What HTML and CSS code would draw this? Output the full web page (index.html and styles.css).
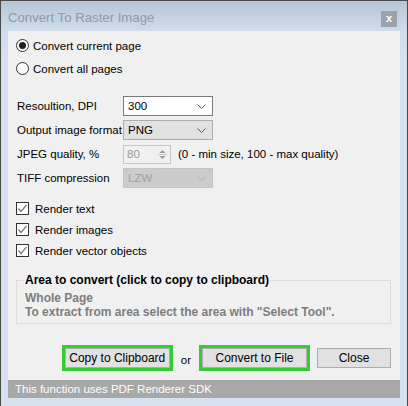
FILE: index.html
```html
<!DOCTYPE html>
<html lang="en">
<head>
  <meta charset="UTF-8" />
  <title>Convert To Raster Image</title>
  <link rel="stylesheet" href="styles.css">
</head>
<body>

<div class="window">
  <!-- title bar -->
  <div class="titlebar">
    <span class="title">Convert To Raster Image</span>
    <span class="close">x</span>
  </div>

  <div class="panel">
    <div class="radios">
      <label class="radio-row"><span class="radio checked"></span>Convert current page</label>
      <label class="radio-row"><span class="radio"></span>Convert all pages</label>
    </div>

    <div class="form">
      <div class="form-row">
        <span class="label">Resoultion, DPI</span>
        <div class="select active">
          <span>300</span>
          <svg class="chev" width="9" height="5" viewBox="0 0 9 5"><polyline points="0.5,0.5 4.5,4.5 8.5,0.5" fill="none" stroke="#555" stroke-width="1"/></svg>
        </div>
      </div>
      <div class="form-row">
        <span class="label">Output image format</span>
        <div class="select">
          <span>PNG</span>
          <svg class="chev" width="9" height="5" viewBox="0 0 9 5"><polyline points="0.5,0.5 4.5,4.5 8.5,0.5" fill="none" stroke="#555" stroke-width="1"/></svg>
        </div>
      </div>
      <div class="form-row">
        <span class="label">JPEG quality, %</span>
        <div class="spin">
          <span>80</span>
          <span class="spin-btns">
            <svg width="11" height="15" viewBox="0 0 11 15">
              <polygon points="5.5,3 8.5,6 2.5,6" fill="#9a9a9a"/>
              <line x1="1" y1="7.5" x2="10" y2="7.5" stroke="#c8c8c8"/>
              <polygon points="2.5,9 8.5,9 5.5,12" fill="#9a9a9a"/>
            </svg>
          </span>
        </div>
        <span class="note">(0 - min size, 100 - max quality)</span>
      </div>
      <div class="form-row">
        <span class="label">TIFF compression</span>
        <div class="select disabled">
          <span>LZW</span>
          <svg class="chev" width="9" height="5" viewBox="0 0 9 5"><polyline points="0.5,0.5 4.5,4.5 8.5,0.5" fill="none" stroke="#b0b0b0" stroke-width="1"/></svg>
        </div>
      </div>
    </div>

    <div class="checks">
      <label class="check-row"><span class="check"><svg width="11" height="11" viewBox="0 0 11 11"><polyline points="1.5,5.5 4,8.5 9.5,2" fill="none" stroke="#777" stroke-width="1.2"/></svg></span>Render text</label>
      <label class="check-row"><span class="check"><svg width="11" height="11" viewBox="0 0 11 11"><polyline points="1.5,5.5 4,8.5 9.5,2" fill="none" stroke="#777" stroke-width="1.2"/></svg></span>Render images</label>
      <label class="check-row"><span class="check"><svg width="11" height="11" viewBox="0 0 11 11"><polyline points="1.5,5.5 4,8.5 9.5,2" fill="none" stroke="#777" stroke-width="1.2"/></svg></span>Render vector objects</label>
    </div>

    <fieldset class="area">
      <legend>Area to convert (click to copy to clipboard)</legend>
      <div class="area-text">Whole Page</div>
      <div class="area-text">To extract from area select the area with "Select Tool".</div>
    </fieldset>

    <div class="buttons">
      <span class="highlight"><button>Copy to Clipboard</button></span>
      <span class="or">or</span>
      <span class="highlight"><button>Convert to File</button></span>
      <button class="close-btn">Close</button>
    </div>
  </div>

  <div class="footer">This function uses PDF Renderer SDK</div>
</div>

</body>
</html>
```

FILE: styles.css
```css
body {
  margin: 0;
  font-family: "Liberation Sans", Arial, sans-serif;
  font-size: 11.5px;
  color: #000;
}

.window {
  width: 408px;
  height: 406px;
  box-sizing: border-box;
  border: 1px solid #4a4a4a;
  border-bottom: none;
  padding: 0 7px 8px 7px;
  background: linear-gradient(#b6c6d6 0px, #cfdcea 30px, #d6e2ef 60px);
}

/* title bar */
.titlebar {
  height: 30px;
  display: flex;
  align-items: center;
  justify-content: space-between;
}

.title {
  font-size: 13.2px;
  color: #8d9aa7;
  padding-top: 2px;
}

.close {
  width: 16px;
  height: 16px;
  margin-right: 3px;
  margin-top: 6px;
  background: #9aa3ab;
  color: #fff;
  font-weight: bold;
  font-size: 11px;
  line-height: 14px;
  text-align: center;
}

.panel {
  height: 349px;
  box-sizing: border-box;
  background: #f0f0f0;
  padding: 3px 9px 0 8px;
  display: flex;
  flex-direction: column;
}

/* radios */
.radio-row {
  height: 23px;
  display: flex;
  align-items: center;
}

.radio {
  width: 11px;
  height: 11px;
  border: 1px solid #333;
  border-radius: 50%;
  background: #fff;
  margin-right: 4px;
  position: relative;
}

.radio.checked::after {
  content: "";
  position: absolute;
  left: 2px;
  top: 2px;
  width: 7px;
  height: 7px;
  border-radius: 50%;
  background: #222;
}

/* form rows */
.form {
  margin-top: 16px;
  display: flex;
  flex-direction: column;
  gap: 4px;
}

.form-row {
  height: 20px;
  display: flex;
  align-items: center;
}

.label {
  width: 106px;
  padding-left: 1px;
  white-space: nowrap;
}

.select {
  width: 90px;
  height: 20px;
  box-sizing: border-box;
  border: 1px solid #adadad;
  background: #e1e1e1;
  display: flex;
  align-items: center;
  justify-content: space-between;
  padding: 0 6px 0 4px;
}

.select.active {
  background: #fff;
  border-color: #7a7a7a;
}

.select.disabled {
  background: #cccccc;
  border-color: #c4c4c4;
  color: #a0a0a0;
}

.spin {
  width: 48px;
  height: 19px;
  box-sizing: border-box;
  border: 1px solid #c6c6c6;
  background: #f0f0f0;
  color: #9a9a9a;
  display: flex;
  align-items: center;
  justify-content: space-between;
  padding: 0 2px 0 3px;
}

.spin-btns {
  display: flex;
}

.note {
  margin-left: 7px;
}

/* checkboxes */
.checks {
  margin-top: 10px;
}

.check-row {
  height: 21px;
  display: flex;
  align-items: center;
}

.check {
  width: 11px;
  height: 11px;
  border: 1px solid #333;
  background: #fff;
  margin-right: 6px;
  display: flex;
}

/* area group */
.area {
  margin: 12px 0 0 0;
  padding: 4px 8px 4px 8px;
  border: 1px solid #dcdcdc;
}

.area legend {
  font-weight: bold;
  font-size: 12px;
  padding: 0 1px;
  margin-left: -1px;
}

.area-text {
  font-weight: bold;
  font-size: 12px;
  color: #7d7d7d;
  line-height: 14px;
}

/* buttons */
.buttons {
  margin-top: auto;
  margin-bottom: 9px;
  display: flex;
  align-items: center;
  justify-content: flex-end;
}

.highlight {
  border: 3px solid #33cc33;
  display: flex;
}

button {
  font-family: "Liberation Sans", Arial, sans-serif;
  font-size: 12px;
  height: 20px;
  border: 1px solid #adadad;
  background: #e1e1e1;
  color: #000;
  padding: 0;
}

.highlight button {
  width: 105px;
}

.or {
  margin: 0 8px;
  padding-top: 3px;
}

.close-btn {
  width: 74px;
  margin-left: 7px;
}

.footer {
  height: 18px;
  background: #a8a8a8;
  color: #fff;
  font-size: 11.5px;
  line-height: 18px;
  padding-left: 7px;
}
```
